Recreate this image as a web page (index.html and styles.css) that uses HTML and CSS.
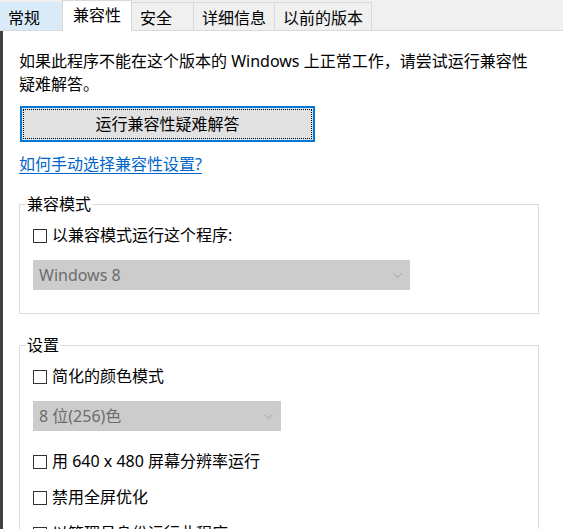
FILE: index.html
```html
<!DOCTYPE html>
<html lang="zh-CN">
<head>
<meta charset="utf-8">
<title>兼容性</title>
<link rel="stylesheet" href="styles.css">
</head>
<body>
<div class="window">
  <div class="tabs">
    <div class="tab tab-hover">常规</div>
    <div class="tab tab-active">兼容性</div>
    <div class="tab">安全</div>
    <div class="tab">详细信息</div>
    <div class="tab">以前的版本</div>
  </div>
  <div class="body">
    <div class="frame-edge"></div>
    <div class="page">
      <p class="intro">如果此程序不能在这个版本的 Windows 上正常工作，请尝试运行兼容性<br>疑难解答。</p>
      <button class="btn" type="button">运行兼容性疑难解答</button>
      <a class="link" href="#">如何手动选择兼容性设置?</a>

      <fieldset class="group group-mode">
        <legend>兼容模式</legend>
        <label class="check"><span class="box"></span>以兼容模式运行这个程序:</label>
        <div class="select select-os">
          <span>Windows 8</span>
          <svg class="chev" width="9" height="5" viewBox="0 0 9 5"><polyline points="0.5,0.5 4.5,4.5 8.5,0.5" fill="none" stroke="#a3a3a3" stroke-width="1"/></svg>
        </div>
      </fieldset>

      <fieldset class="group group-settings">
        <legend>设置</legend>
        <label class="check"><span class="box"></span>简化的颜色模式</label>
        <div class="select select-color">
          <span>8 位(256)色</span>
          <svg class="chev" width="9" height="5" viewBox="0 0 9 5"><polyline points="0.5,0.5 4.5,4.5 8.5,0.5" fill="none" stroke="#a3a3a3" stroke-width="1"/></svg>
        </div>
        <label class="check"><span class="box"></span>用 640 x 480 屏幕分辨率运行</label>
        <label class="check"><span class="box"></span>禁用全屏优化</label>
        <label class="check"><span class="box"></span>以管理员身份运行此程序</label>
      </fieldset>
    </div>
  </div>
</div>
</body>
</html>
```

FILE: styles.css
```css
* {
  box-sizing: border-box;
}

html,
body {
  margin: 0;
  padding: 0;
}

body {
  width: 563px;
  height: 529px;
  overflow: hidden;
  background: #ffffff;
  color: #000000;
  font-family: "Noto Sans", "Noto Sans CJK SC", sans-serif;
  font-size: 16px;
}

.window {
  display: flex;
  flex-direction: column;
  height: 529px;
}

/* ---------- tab strip ---------- */
.tabs {
  flex: none;
  display: flex;
  align-items: flex-end;
  height: 31px;
  background: #f0f0f0;
  border-bottom: 1px solid #d9d9d9;
}

.tab {
  height: 28px;
  min-width: 62px;
  padding: 2px 8px 0 8px;
  display: flex;
  align-items: center;
  line-height: 20px;
  white-space: nowrap;
  background: #f0f0f0;
  border-top: 1px solid #d9d9d9;
  border-left: 1px solid #d9d9d9;
}

.tab:last-child {
  border-right: 1px solid #d9d9d9;
}

.tab-hover {
  background: #d9ebf9;
  border-top-color: #d9ebf9;
  border-left: none;
}

.tab-active {
  position: relative;
  z-index: 1;
  height: 31px;
  margin-bottom: -1px;
  margin-right: -1px;
  padding: 0 10px 2px 10px;
  background: #ffffff;
  border-right: 1px solid #d9d9d9;
}

/* ---------- page ---------- */
.body {
  flex: 1;
  display: flex;
  min-height: 0;
}

.frame-edge {
  flex: none;
  width: 3px;
  background: #404040;
}

.page {
  flex: 1;
  padding: 19px 24px 0 16px;
}

.intro {
  margin: 0;
  line-height: 23px;
  white-space: nowrap;
}

.btn {
  display: block;
  width: 295px;
  height: 36px;
  margin: 10px 0 0 1px;
  padding: 0;
  background: #e1e1e1;
  border: 2px solid #0078d7;
  outline: 1px dotted #000000;
  outline-offset: -4px;
  color: #000000;
  font: inherit;
  line-height: 20px;
}

.link {
  display: block;
  width: max-content;
  margin-top: 11px;
  line-height: 23px;
  color: #0066cc;
  text-decoration: underline;
  text-underline-offset: 3px;
  text-decoration-thickness: 1px;
}

/* ---------- group boxes ---------- */
.group {
  margin: 18px 0 0 0;
  padding: 10px 13px 23px 13px;
  min-width: 0;
  border: 1px solid #dcdcdc;
}

.group legend {
  margin-left: -7px;
  padding: 0 1px;
  line-height: 20px;
}

.group-settings {
  margin-top: 21px;
}

.check {
  display: flex;
  align-items: center;
  height: 23px;
  line-height: 23px;
  white-space: nowrap;
}

.box {
  flex: none;
  width: 14px;
  height: 14px;
  margin-right: 5px;
  background: #ffffff;
  border: 1px solid #333333;
}

.select {
  display: flex;
  align-items: center;
  justify-content: space-between;
  height: 30px;
  margin-top: 13px;
  padding: 0 8px 0 6px;
  background: #cccccc;
  color: #6d6d6d;
  line-height: 20px;
}

.select-os {
  width: 377px;
}

.select-color {
  width: 248px;
}

.chev {
  display: block;
  flex: none;
}

.select + .check {
  margin-top: 19px;
}

.check + .check {
  margin-top: 13px;
}
```
